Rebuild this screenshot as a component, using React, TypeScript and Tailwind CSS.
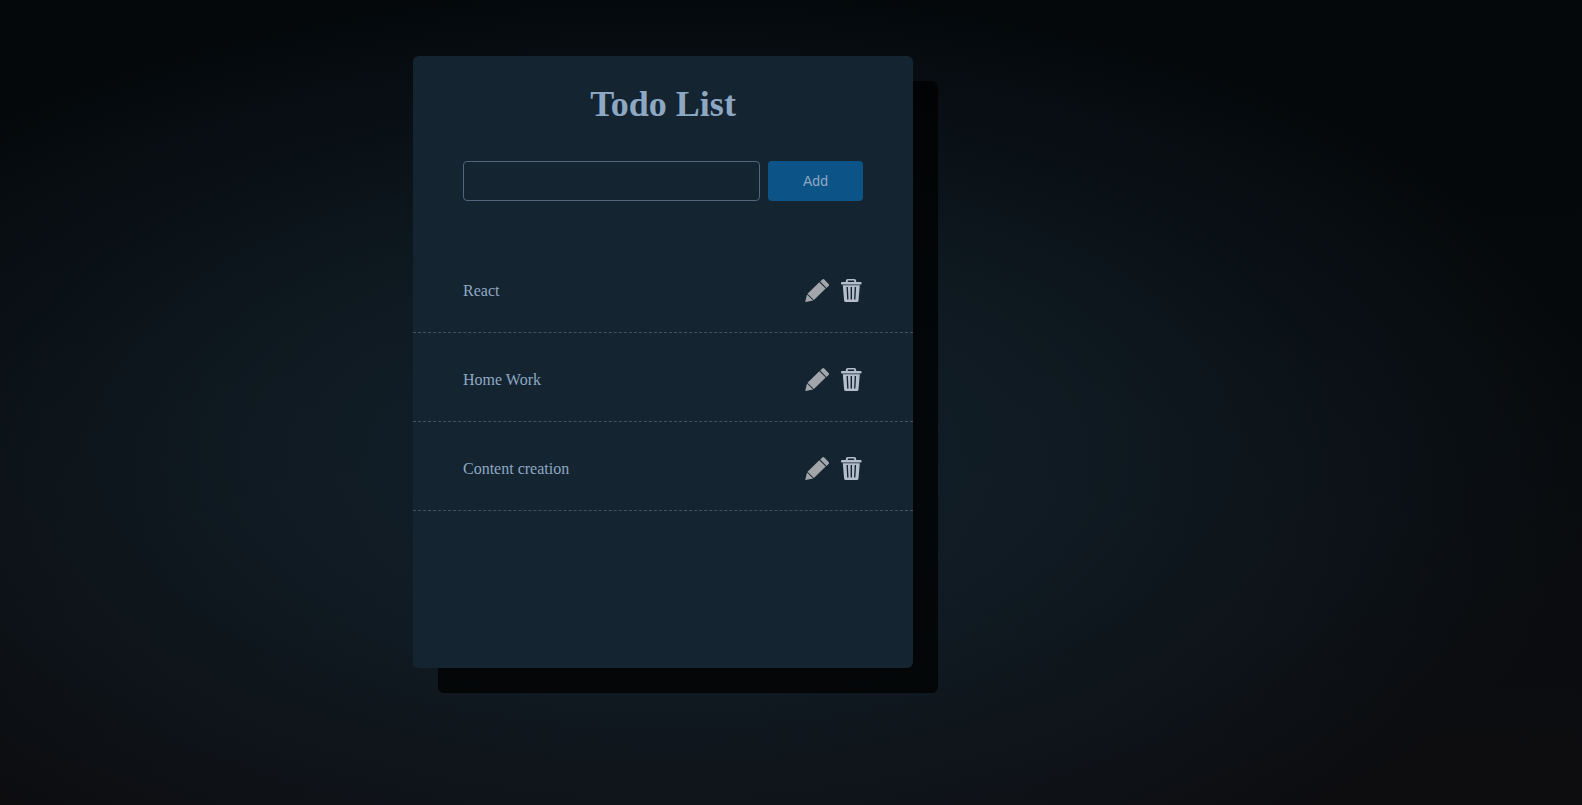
import { useState } from "react";
import type { FormEvent } from "react";

const initialTodos = ["React", "Home Work", "Content creation"];

function PencilIcon() {
  return (
    <svg viewBox="0 1 24 24" fill="currentColor" aria-hidden="true" className="size-6 text-[#a2a5a9]">
      <path d="M17.3 1.5a1.4 1.4 0 0 1 2 0l4.3 4.4a1.4 1.4 0 0 1 0 2l-2.1 2-6.3-6.4z" />
      <path d="M14.3 4.2l6.4 6.4L8.9 22.1 2.5 15.7z" />
      <path d="M2 16.4l6.2 6.2L.7 24Q.2 24 .3 23.4z" />
    </svg>
  );
}

function TrashIcon() {
  return (
    <svg viewBox="0 1 24 24" fill="currentColor" aria-hidden="true" className="size-6 text-[#b3bdcc]">
      <path d="M6.8 4.4V2.9A1.9 1.9 0 0 1 8.7 1h6.6a1.9 1.9 0 0 1 1.9 1.9v1.5h-2V2.6H8.8v1.8z" />
      <rect x="2" y="4" width="20.6" height="2.5" rx=".9" />
      <path
        fillRule="evenodd"
        d="M3.8 7.3h17l-1.3 15.2A1.6 1.6 0 0 1 17.9 24H6.7a1.6 1.6 0 0 1-1.6-1.5zM7.5 9l.7 12.5h1.3L8.9 9zM11.6 9v12.5H13V9zM15.7 9l-.6 12.5h1.3L17.1 9z"
      />
    </svg>
  );
}

export default function App() {
  const [todos, setTodos] = useState(initialTodos);
  const [draft, setDraft] = useState("");

  const submit = (event: FormEvent) => {
    event.preventDefault();
    if (!draft.trim()) return;
    setTodos([...todos, draft.trim()]);
    setDraft("");
  };

  const edit = (index: number) => {
    setDraft(todos[index]);
    setTodos(todos.filter((_, i) => i !== index));
  };

  return (
    <div className="min-h-screen bg-[#04080a] bg-[radial-gradient(ellipse_60%_59%_at_42%_57%,#13222d_0%,#13222d99_50%,#13222d00_100%),linear-gradient(#04080b_0%,#06090b_40%,#0d0d10_100%)] px-4 py-14 font-['Liberation_Serif',serif] text-[#8ea8c3] lg:pr-68">
      <main className="mx-auto min-h-[612px] w-full max-w-[500px] rounded-md bg-[#152431] pt-6 pb-12 shadow-[25px_25px_0_rgba(0,0,0,0.75)]">
        <h1 className="text-center text-4xl leading-12 font-bold">Todo List</h1>
        <form onSubmit={submit} className="mt-[33px] flex gap-2 px-[50px]">
          <input
            aria-label="New todo"
            value={draft}
            onChange={(event) => setDraft(event.target.value)}
            className="h-10 min-w-0 flex-1 rounded border border-[#526579] bg-transparent px-3 outline-none focus:border-[#8ea8c3]"
          />
          <button
            type="submit"
            className="h-10 w-[95px] rounded bg-[#0c5487] font-['Liberation_Sans',sans-serif] text-sm"
          >
            Add
          </button>
        </form>
        <ul className="mt-[43px]">
          {todos.map((todo, index) => (
            <li
              key={index}
              className="flex h-[89px] items-center justify-between border-b border-dashed border-[#43525e] px-[50px] pt-1.5"
            >
              <span>{todo}</span>
              <span className="flex gap-2.5">
                <button type="button" aria-label={`Edit ${todo}`} onClick={() => edit(index)}>
                  <PencilIcon />
                </button>
                <button
                  type="button"
                  aria-label={`Delete ${todo}`}
                  onClick={() => setTodos(todos.filter((_, i) => i !== index))}
                >
                  <TrashIcon />
                </button>
              </span>
            </li>
          ))}
        </ul>
      </main>
    </div>
  );
}
